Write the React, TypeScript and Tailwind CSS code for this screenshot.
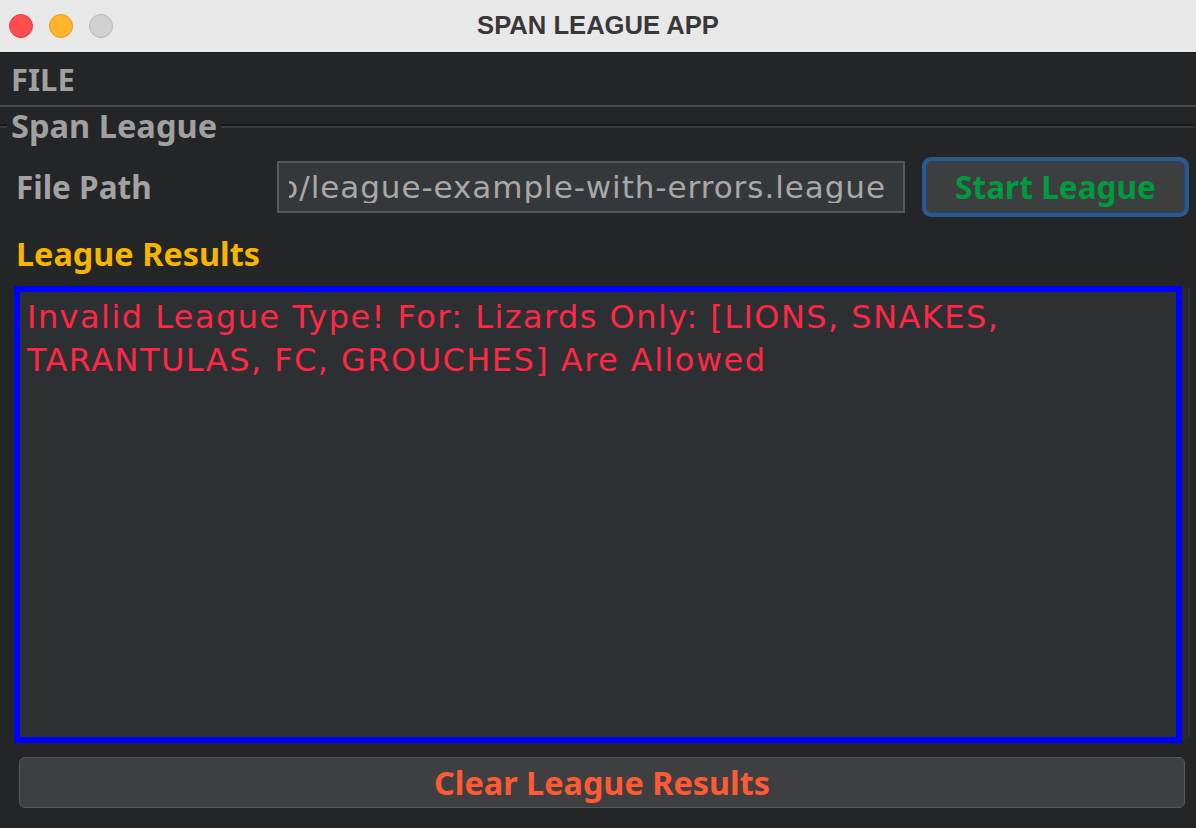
import React from "react";

const bold = { fontFamily: '"Noto Sans", "DejaVu Sans", sans-serif' } as const;
const reg = { fontFamily: '"DejaVu Sans", "Noto Sans", sans-serif' } as const;

export default function App() {
  return (
    <div className="w-[1196px] h-[828px] bg-[#242527] flex flex-col overflow-hidden">
      {/* Title bar */}
      <div className="h-[53px] shrink-0 bg-[#e8e8e8] border-b border-[#1a1a1a] grid grid-cols-[1fr_auto_1fr] items-center">
        <div className="flex items-center gap-[16px] pl-[9px]">
          <span className="w-[24px] h-[24px] rounded-full bg-[#fe4d4e] border border-[#e2403f]" />
          <span className="w-[24px] h-[24px] rounded-full bg-[#ffb42a] border border-[#e09d20]" />
          <span className="w-[24px] h-[24px] rounded-full bg-[#d1d1d1] border border-[#b8b8b8]" />
        </div>
        <div
          className="text-[25.6px] font-bold text-[#383838] leading-none"
          style={{ fontFamily: '"Liberation Sans", Arial, sans-serif' }}
        >
          SPAN LEAGUE APP
        </div>
        <div />
      </div>

      {/* Menu bar */}
      <div className="h-[52px] shrink-0 flex items-center pl-[11px]">
        <span className="text-[31px] font-bold text-[#a0a0a0] leading-none" style={bold}>
          FILE
        </span>
      </div>
      <div className="h-[2px] shrink-0 bg-[#47484a]" />

      {/* Titled border */}
      <div className="h-[38px] shrink-0 flex items-center">
        <div className="w-[7px] flex flex-col">
          <div className="h-[2px] bg-[#18181a]" />
          <div className="h-[2px] bg-[#38393b]" />
        </div>
        <span className="px-[4px] text-[32.6px] font-bold text-[#a0a0a0] leading-[38px]" style={bold}>
          Span League
        </span>
        <div className="flex-1 flex flex-col pr-[2px]">
          <div className="h-[2px] bg-[#18181a]" />
          <div className="h-[2px] bg-[#38393b]" />
        </div>
      </div>

      {/* File path row */}
      <div className="mt-[12px] h-[60px] shrink-0 flex items-center pl-[16px]">
        <div className="text-[31.5px] font-bold text-[#a2a2a2] leading-none" style={bold}>
          File Path
        </div>
        <div className="ml-auto w-[628px] h-[52px] border-2 border-[#56585a] bg-[#35383b] pl-[10px] pr-[17px] flex items-center">
          <div className="flex-1 overflow-hidden flex justify-end">
            <span
              className="whitespace-nowrap text-[31px] text-[#a8a8a8] leading-none tracking-[0.95px]"
              style={reg}
            >
              demo/league-example-with-errors.league
            </span>
          </div>
        </div>
        <div className="ml-[17px] mr-[7px] w-[267px] h-[60px] rounded-[9px] bg-[#2a5a8c] p-[4px]">
          <div className="w-full h-full rounded-[6px] bg-[#3d3e40] border border-[#23456b] flex items-center justify-center">
            <span className="text-[31.6px] font-bold text-[#009a3e] leading-none" style={bold}>
              Start League
            </span>
          </div>
        </div>
      </div>

      {/* League results label */}
      <div className="mt-[16px] h-[40px] shrink-0 flex items-center pl-[16px]">
        <span className="text-[32.4px] font-bold text-[#f6b500] leading-none" style={bold}>
          League Results
        </span>
      </div>

      {/* Results area */}
      <div className="mt-[13px] h-[457px] shrink-0 ml-[14px] w-[1176px] flex">
        <div className="w-[1168px] h-full border-[6px] border-[#0000ff] bg-[#2d3032] pl-[7px] pt-[4px] pr-[20px]">
          <p className="text-[32px] leading-[42.5px] text-[#ff2745] tracking-[1.45px]" style={reg}>
            Invalid League Type! For: Lizards Only: [LIONS, SNAKES, TARANTULAS, FC, GROUCHES] Are Allowed
          </p>
        </div>
        <div className="w-[6px] h-[451px] mt-[2px] bg-[#28292b]" />
        <div className="w-[2px] h-[449px] mt-[2px] bg-[#303133]" />
      </div>

      {/* Clear button */}
      <div className="mt-[14px] ml-[19px] w-[1166px] h-[51px] shrink-0 rounded-[6px] bg-[#3e3f41] border border-[#57585a] flex items-center justify-center">
        <span className="text-[32.4px] font-bold text-[#ff5a33] leading-none" style={bold}>
          Clear League Results
        </span>
      </div>
    </div>
  );
}
